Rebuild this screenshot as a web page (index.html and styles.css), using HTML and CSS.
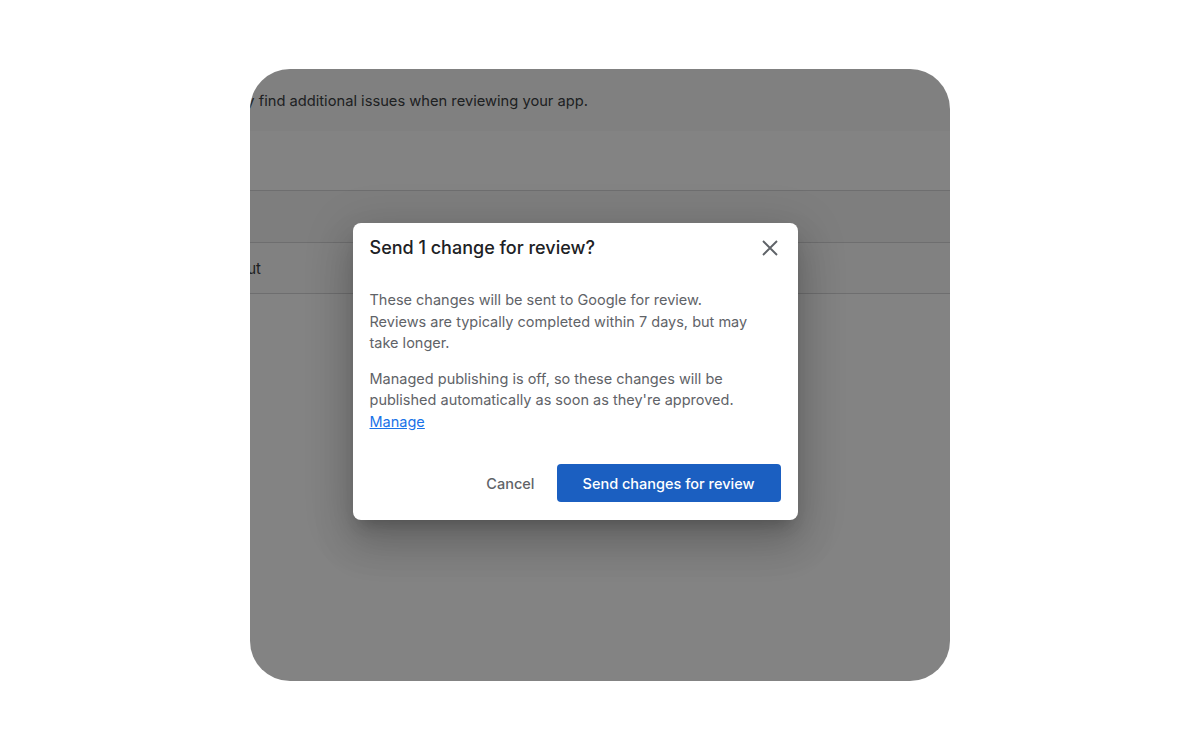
FILE: index.html
```html
<!DOCTYPE html>
<html lang="en">
<head>
    <meta charset="UTF-8">
    <meta name="viewport" content="width=device-width, initial-scale=1.0">
    <title>Send for review</title>
    <link rel="stylesheet" href="styles.css">
</head>
<body>
    <div class="frame">
        <div class="page">
            <div class="intro"><span>Google may find additional issues when reviewing your app.</span></div>
            <div class="row row-head"></div>
            <div class="row row-sub"></div>
            <div class="row row-item"><span>About</span></div>
        </div>

        <div class="scrim">
            <div class="dialog">
                <div class="dialog-head">
                    <h2>Send 1 change for review?</h2>
                    <button class="close" aria-label="Close">
                        <svg width="24" height="24" viewBox="0 0 24 24">
                            <path d="M5 5 L19 19 M19 5 L5 19" stroke="#5f6368" stroke-width="1.9" fill="none"/>
                        </svg>
                    </button>
                </div>
                <div class="dialog-body">
                    <p>These changes will be sent to Google for review. Reviews are typically completed within 7 days, but may take longer.</p>
                    <p>Managed publishing is off, so these changes will be published automatically as soon as they're approved. <a href="#">Manage</a></p>
                </div>
                <div class="dialog-actions">
                    <button class="btn-text">Cancel</button>
                    <button class="btn-primary">Send changes for review</button>
                </div>
            </div>
        </div>
    </div>
</body>
</html>
```

FILE: styles.css
```css
body {
    margin: 0;
    background: #ffffff;
    font-family: Inter, Roboto, "Liberation Sans", Arial, sans-serif;
    height: 100vh;
    display: flex;
    align-items: center;
    justify-content: center;
}
.frame {
    width: 700px;
    height: 612px;
    border-radius: 40px;
    overflow: hidden;
    position: relative;
    background: #ffffff;
}
.intro {
    height: 62px;
    display: flex;
    align-items: center;
    justify-content: flex-end;
    width: 100%;
    padding: 2px 362px 0 0;
    box-sizing: border-box;
    font-size: 14.7px;
    color: #3c4043;
    white-space: nowrap;
    background: #f9f9f9;
}
.row {
    border-bottom: 1px solid #d6d6d8;
}
.row-head {
    height: 59px;
    background: #ffffff;
}
.row-sub {
    height: 51px;
    background: #f5f5f5;
}
.row-item {
    height: 51px;
    display: flex;
    align-items: center;
    justify-content: flex-end;
    box-sizing: border-box;
    padding-right: 689px;
    font-size: 15px;
    color: #3c4043;
    white-space: nowrap;
    background: #fcfcfc;
}
.scrim {
    position: absolute;
    top: 0;
    left: 0;
    right: 0;
    bottom: 0;
    background: rgba(0, 0, 0, 0.485);
    display: flex;
    align-items: center;
    justify-content: center;
    padding: 0 50px 7px 0;
}
.dialog {
    width: 445px;
    background: #ffffff;
    border-radius: 8px;
    box-shadow: 0 24px 38px 3px rgba(0,0,0,0.14), 0 9px 46px 8px rgba(0,0,0,0.12), 0 11px 15px -7px rgba(0,0,0,0.2);
    padding: 13px 17px 18px;
    box-sizing: border-box;
}
.dialog-head {
    display: flex;
    align-items: center;
    justify-content: space-between;
}
.dialog-head h2 {
    margin: 0;
    font-size: 18px;
    font-weight: 500;
    color: #202124;
    line-height: 24px;
}
.close {
    border: none;
    background: none;
    padding: 0;
    width: 24px;
    height: 24px;
    display: flex;
    align-items: center;
    justify-content: center;
    margin-right: -1px;
    cursor: pointer;
}
.dialog-body {
    padding-top: 29px;
    padding-right: 26px;
}
.dialog-body p {
    margin: 0 0 14px;
    font-size: 14.5px;
    line-height: 21.5px;
    color: #5f6368;
}
.dialog-body a {
    color: #1a73e8;
}
.dialog-actions {
    display: flex;
    justify-content: flex-end;
    align-items: center;
    gap: 22px;
    margin-top: 32px;
}
.btn-text {
    border: none;
    background: none;
    font-family: inherit;
    font-size: 14.5px;
    font-weight: 500;
    color: #5f6368;
    padding: 0;
}
.btn-primary {
    border: none;
    background: #1b5fc1;
    color: #ffffff;
    font-family: inherit;
    font-size: 14.5px;
    font-weight: 500;
    height: 38px;
    width: 224px;
    border-radius: 4px;
}
```
